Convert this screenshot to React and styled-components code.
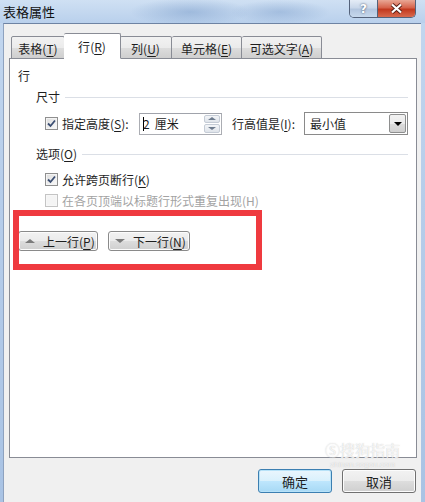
import styled, { createGlobalStyle } from 'styled-components';

const GlobalStyle = createGlobalStyle`
	html, body {
		margin: 0;
		padding: 0;
		background: #f0f0f0;
	}
	* {
		box-sizing: border-box;
	}
`;

const FONT = `"Noto Sans CJK SC", "Microsoft YaHei", "Liberation Sans", sans-serif`;

const tabs = [
	{ label: '表格', key: 'T', width: 54 },
	{ label: '行', key: 'R', width: 57, active: true },
	{ label: '列', key: 'U', width: 52 },
	{ label: '单元格', key: 'E', width: 70 },
	{ label: '可选文字', key: 'A', width: 80 },
];

const CheckMark = () => (
	<svg width="9" height="9" viewBox="0 0 9 9">
		<path d="M1 4.5 L3.5 7 L8 1.5" fill="none" stroke="#3b4e72" strokeWidth="1.8" />
	</svg>
);

const Check = ({ checked, disabled }) => (
	<CheckBox $disabled={disabled}>{checked && <CheckMark />}</CheckBox>
);

// text with an underlined access key, e.g. 行(R)
const Text = ({ children, k }) => (
	<span>
		{children}
		{k && (
			<>
				(<u>{k}</u>)
			</>
		)}
	</span>
);

export default function App() {
	return (
		<Window>
			<GlobalStyle />
			<TitleBar>
				<Title>表格属性</Title>
				<Caption>
					<CapButton $kind="help">?</CapButton>
					<CapButton $kind="close">
						<svg width="13" height="11" viewBox="0 0 13 11">
							<path d="M2 1.5 L11 9.5 M11 1.5 L2 9.5" stroke="#5a2218" strokeWidth="4" />
							<path d="M2 1.5 L11 9.5 M11 1.5 L2 9.5" stroke="#fff" strokeWidth="2.2" />
						</svg>
					</CapButton>
				</Caption>
			</TitleBar>
			<Body>
				<TabStrip>
					{tabs.map((t) => (
						<Tab key={t.key} $active={t.active} $width={t.width}>
							<Text k={t.key}>{t.label}</Text>
						</Tab>
					))}
				</TabStrip>
				<Panel>
					<Label $top={9}>行</Label>
					<GroupHead $top={5}>
						<Text>尺寸</Text>
					</GroupHead>
					<Row $top={7}>
						<Check checked />
						<FieldLabel $width={77}>
							<Text k="S">指定高度</Text>:
						</FieldLabel>
						<Spin>
							<SpinText>
								<Caret />
								<span>2</span>
								<Unit>厘米</Unit>
							</SpinText>
							<SpinButtons>
								<SpinHalf>
									<Tri $dir="up" />
								</SpinHalf>
								<SpinHalf>
									<Tri $dir="down" />
								</SpinHalf>
							</SpinButtons>
						</Spin>
						<FieldLabel $width={72} $left={10}>
							<Text k="I">行高值是</Text>:
						</FieldLabel>
						<Select>
							<SelectText>最小值</SelectText>
							<DropButton>
								<DropArrow />
							</DropButton>
						</Select>
					</Row>
					<GroupHead $top={11}>
						<Text k="O">选项</Text>
					</GroupHead>
					<Row $top={9} $height={16}>
						<Check checked />
						<FieldLabel>
							<Text k="K">允许跨页断行</Text>
						</FieldLabel>
					</Row>
					<Row $top={5} $height={16}>
						<Check disabled />
						<FieldLabel $disabled>在各页顶端以标题行形式重复出现(H)</FieldLabel>
					</Row>
					<NavRow>
						<NavButton $width={80}>
							<Tri $dir="up" $color="#7b7b7b" $size={4} />
							<Text k="P">上一行</Text>
						</NavButton>
						<NavButton $width={82}>
							<Tri $dir="down" $color="#7b7b7b" $size={4} />
							<Text k="N">下一行</Text>
						</NavButton>
					</NavRow>
				</Panel>
				<Footer>
					<DlgButton $default>确定</DlgButton>
					<DlgButton>取消</DlgButton>
				</Footer>
			</Body>
			<Highlight />
			<Watermark>
				<span>Ⓢ搜狗指南</span>
				<small>zhinan.sogou.com</small>
			</Watermark>
		</Window>
	);
}

const Window = styled.div`
	position: relative;
	width: 425px;
	height: 502px;
	overflow: hidden;
	display: flex;
	flex-direction: column;
	background: linear-gradient(to bottom, #c3d7ef 0%, #b6cdea 40%, #a9c3e4 100%);
	font-family: ${FONT};
	font-size: 12px;
	color: #1e1e1e;
	u {
		text-decoration-thickness: 1px;
		text-underline-offset: 2px;
	}
`;

const TitleBar = styled.div`
	height: 23px;
	flex: none;
	display: flex;
	align-items: flex-start;
	justify-content: space-between;
	padding: 0 9px 0 3px;
	background:
		radial-gradient(ellipse 60px 14px at 190px 12px, rgba(90, 130, 185, 0.35), transparent),
		radial-gradient(ellipse 50px 12px at 280px 12px, rgba(90, 130, 185, 0.3), transparent),
		linear-gradient(to bottom, #cfe0f3, #b9d0ec);
`;

const Title = styled.div`
	font-size: 13px;
	line-height: 23px;
	color: #101010;
`;

const Caption = styled.div`
	display: flex;
	height: 18px;
	border: 1px solid #54627a;
	border-top: none;
	border-radius: 0 0 5px 5px;
	overflow: hidden;
`;

const CapButton = styled.div`
	display: flex;
	align-items: center;
	justify-content: center;
	width: ${({ $kind }) => ($kind === 'close' ? '38px' : '27px')};
	height: 100%;
	font-family: "DejaVu Sans", sans-serif;
	font-weight: bold;
	font-size: 12px;
	color: #fff;
	text-shadow: 0 0 2px #2a3a55;
	background: ${({ $kind }) =>
		$kind === 'close'
			? 'linear-gradient(to bottom, #e9a795 0%, #d6634b 45%, #c2391f 55%, #d86a4e 100%)'
			: 'linear-gradient(to bottom, #e4ecf6 0%, #c9d7ea 45%, #b3c6df 55%, #c7d8ec 100%)'};
	border-left: ${({ $kind }) => ($kind === 'close' ? '1px solid #54627a' : 'none')};
`;

const Body = styled.div`
	flex: 1;
	margin: 0 4px 0 3px;
	background: #f0f0f0;
	border-top: 1px solid #6e83a3;
	border-left: 1px solid #8ea2bf;
	padding: 9px 4px 0 5px;
	display: flex;
	flex-direction: column;
`;

const TabStrip = styled.div`
	display: flex;
	align-items: flex-end;
	height: 26px;
	padding-left: 2px;
	position: relative;
	z-index: 1;
	margin-bottom: -1px;
`;

const Tab = styled.div`
	width: ${({ $width }) => $width}px;
	height: ${({ $active }) => ($active ? 26 : 23)}px;
	margin: ${({ $active }) => ($active ? '0 -1px' : '0')};
	display: flex;
	align-items: center;
	justify-content: center;
	padding-top: ${({ $active }) => ($active ? 0 : 1)}px;
	border: 1px solid #898c95;
	border-bottom: ${({ $active }) => ($active ? '1px solid #fff' : '1px solid #898c95')};
	border-radius: 2px 2px 0 0;
	background: ${({ $active }) =>
		$active ? '#fff' : 'linear-gradient(to bottom, #f2f2f2 0%, #ebebeb 50%, #dddddd 51%, #cfcfcf 100%)'};
	position: relative;
	z-index: ${({ $active }) => ($active ? 2 : 1)};
	& + & {
		border-left: ${({ $active }) => ($active ? '1px solid #898c95' : 'none')};
	}
`;

const Panel = styled.div`
	height: 400px;
	background: #fff;
	border: 1px solid #898c95;
	padding: 0 8px 0 8px;
	display: flex;
	flex-direction: column;
`;

const Label = styled.div`
	margin-top: ${({ $top }) => $top}px;
	line-height: 16px;
`;

const GroupHead = styled.div`
	margin-top: ${({ $top }) => $top}px;
	padding-left: 18px;
	display: flex;
	align-items: center;
	gap: 5px;
	line-height: 16px;
	&::after {
		content: '';
		flex: 1;
		height: 1px;
		background: #dbdfe6;
	}
`;

const Row = styled.div`
	margin-top: ${({ $top }) => $top}px;
	height: ${({ $height }) => $height || 23}px;
	padding-left: 27px;
	display: flex;
	align-items: center;
`;

const CheckBox = styled.div`
	width: 13px;
	height: 13px;
	flex: none;
	margin-right: 4px;
	border: 1px solid ${({ $disabled }) => ($disabled ? '#c4c4c4' : '#8f8f8f')};
	background: ${({ $disabled }) =>
		$disabled ? '#f4f4f4' : 'linear-gradient(135deg, #dcdcdc, #fbfbfb)'};
	display: flex;
	align-items: center;
	justify-content: center;
	box-shadow: inset 0 0 0 1px ${({ $disabled }) => ($disabled ? '#f7f7f7' : '#f4f4f4')};
`;

const FieldLabel = styled.div`
	width: ${({ $width }) => ($width ? `${$width}px` : 'auto')};
	margin-left: ${({ $left }) => $left || 0}px;
	flex: none;
	white-space: nowrap;
	color: ${({ $disabled }) => ($disabled ? '#a3a3a3' : '#1e1e1e')};
`;

const Spin = styled.div`
	width: 83px;
	height: 22px;
	border: 1px solid #abadb3;
	border-top-color: #a0a3ab;
	display: flex;
	align-items: center;
	justify-content: space-between;
	padding: 1px 1px 1px 3px;
	background: #fff;
`;

const SpinText = styled.div`
	display: flex;
	align-items: center;
`;

const Unit = styled.span`
	margin-left: 5px;
`;

const Caret = styled.span`
	display: inline-block;
	width: 1px;
	height: 14px;
	background: #000;
	margin-right: -1px;
`;

const SpinButtons = styled.div`
	width: 16px;
	height: 18px;
	display: flex;
	flex-direction: column;
	gap: 1px;
`;

const SpinHalf = styled.div`
	flex: 1;
	border: 1px solid #c5ccd6;
	border-radius: 2px;
	background: linear-gradient(to bottom, #f3f5f8, #dfe4ea);
	display: flex;
	align-items: center;
	justify-content: center;
`;

const Tri = styled.span`
	display: inline-block;
	width: 0;
	height: 0;
	flex: none;
	border-left: ${({ $size }) => ($size || 3) + 1}px solid transparent;
	border-right: ${({ $size }) => ($size || 3) + 1}px solid transparent;
	${({ $dir, $color, $size }) =>
		$dir === 'up'
			? `border-bottom: ${$size || 3}px solid ${$color || '#6d7b8d'};`
			: `border-top: ${$size || 3}px solid ${$color || '#6d7b8d'};`}
`;

const Select = styled.div`
	width: 104px;
	height: 23px;
	border: 1px solid #8a8a8a;
	background: #fff;
	display: flex;
	align-items: center;
	justify-content: space-between;
	padding: 1px;
`;

const SelectText = styled.div`
	padding-left: 4px;
`;

const DropButton = styled.div`
	width: 17px;
	height: 19px;
	border: 1px solid #8e8f8f;
	border-radius: 2px;
	background: linear-gradient(to bottom, #f2f2f2 0%, #ebebeb 50%, #dcdcdc 51%, #cfcfcf 100%);
	display: flex;
	align-items: center;
	justify-content: center;
`;

const DropArrow = styled.span`
	width: 0;
	height: 0;
	border-left: 4px solid transparent;
	border-right: 4px solid transparent;
	border-top: 4px solid #000;
`;

const NavRow = styled.div`
	margin-top: 23px;
	display: flex;
	gap: 10px;
`;

const NavButton = styled.div`
	width: ${({ $width }) => $width}px;
	height: 20px;
	border: 1px solid #8a8a8a;
	border-radius: 3px;
	background: linear-gradient(to bottom, #f2f2f2 0%, #ebebeb 50%, #dddddd 51%, #cfcfcf 100%);
	box-shadow: inset 0 0 0 1px #fcfcfc;
	display: flex;
	align-items: center;
	padding-left: 6px;
	gap: 8px;
	white-space: nowrap;
`;

const Footer = styled.div`
	margin-top: 11px;
	display: flex;
	justify-content: flex-end;
	gap: 10px;
	padding-right: 1px;
`;

const DlgButton = styled.div`
	width: 74px;
	height: 24px;
	border: 1px solid ${({ $default }) => ($default ? '#3c7fb1' : '#707070')};
	border-radius: 3px;
	display: flex;
	align-items: center;
	justify-content: center;
	background: ${({ $default }) =>
		$default
			? 'linear-gradient(to bottom, #eaf6fd 0%, #d9f0fc 50%, #bee6fd 51%, #a7d9f5 100%)'
			: 'linear-gradient(to bottom, #f2f2f2 0%, #ebebeb 50%, #dddddd 51%, #cfcfcf 100%)'};
	box-shadow: inset 0 0 0 1px ${({ $default }) => ($default ? '#b7e2f8' : '#fcfcfc')};
	font-size: 13px;
`;

const Highlight = styled.div`
	position: absolute;
	left: 13px;
	top: 210px;
	width: 249px;
	height: 60px;
	border: 6px solid #ef3a3f;
	pointer-events: none;
`;

const Watermark = styled.div`
	position: absolute;
	left: 325px;
	top: 441px;
	display: flex;
	flex-direction: column;
	align-items: center;
	gap: 1px;
	color: rgba(255, 255, 255, 0.8);
	text-shadow: 0 0 1px rgba(150, 150, 150, 0.6);
	pointer-events: none;
	span {
		font-size: 15px;
		line-height: 18px;
	}
	small {
		font-size: 8px;
		line-height: 10px;
		font-family: "Liberation Sans", sans-serif;
	}
`;
